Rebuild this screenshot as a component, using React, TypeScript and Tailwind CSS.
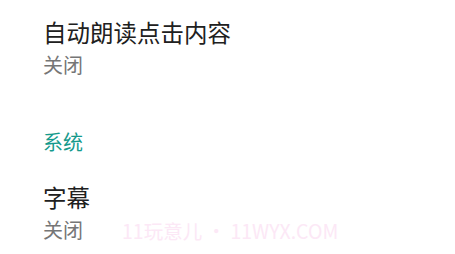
import React from 'react';

// Settings list: one plain item, a section header, another item.

const FONT = '"Noto Sans CJK SC", "Noto Sans", sans-serif';

function SettingRow({ title, summary, className }: { title: string; summary: string; className?: string }) {
  return (
    <div className={className}>
      <p className="text-[23.5px] leading-[29px] text-[#202020]">{title}</p>
      <p className="mt-[5px] text-[20px] leading-[26px] text-[#767676]">{summary}</p>
    </div>
  );
}

export default function App() {
  return (
    <div className="relative h-[254px] w-[455px] overflow-hidden bg-white" style={{ fontFamily: FONT }}>
      <div className="pl-[43px] pt-[18px]">
        <SettingRow title="自动朗读点击内容" summary="关闭" />
        <p className="mt-[50px] text-[20px] leading-[27px] text-[#169a8c]">系统</p>
        <SettingRow className="mt-[28px]" title="字幕" summary="关闭" />
      </div>
      {/* watermark */}
      <div className="absolute left-[122px] top-[218px] text-[19.5px] leading-[26px] text-[#fce8f6]">
        11玩意儿 • 11WYX.COM
      </div>
    </div>
  );
}
